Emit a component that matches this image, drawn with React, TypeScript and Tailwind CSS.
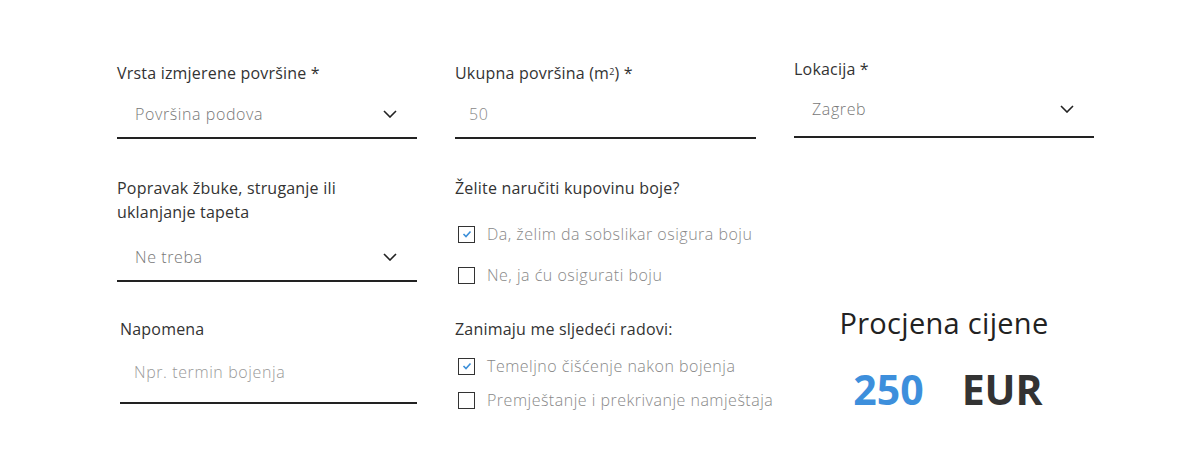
import React from "react";

const font = { fontFamily: '"Open Sans", "Noto Sans", sans-serif' };

function Chevron() {
  return (
    <svg width="14" height="8" viewBox="0 0 14 8" fill="none" className="shrink-0">
      <path d="M1 1l6 6 6-6" stroke="#222" strokeWidth="1.6" />
    </svg>
  );
}

function SelectField({ label, value, extra = "", box = "mt-[6px] h-[48px]" }: { label: React.ReactNode; value: string; extra?: string; box?: string }) {
  return (
    <div className={extra}>
      <div className="text-[16px] tracking-[0.2px] leading-6 text-[#333]">{label}</div>
      <div className={`${box} flex items-center justify-between pl-[18px] pr-[20px] border-b-2 border-[#222]`}>
        <span className="text-[16px] tracking-[0.6px] font-light text-[#777]">{value}</span>
        <Chevron />
      </div>
    </div>
  );
}

function Check({ checked, label }: { checked?: boolean; label: string }) {
  return (
    <label className="flex items-center gap-[12px] pl-[3px] whitespace-nowrap">
      <span className="shrink-0 w-[17px] h-[17px] border border-[#333] flex items-center justify-center bg-white">
        {checked && (
          <svg width="10" height="8" viewBox="0 0 10 8" fill="none">
            <path d="M1.5 4l2.5 2.5L8.5 1.5" stroke="#3b8fd9" strokeWidth="1.6" />
          </svg>
        )}
      </span>
      <span className="text-[16px] leading-6 tracking-[0.5px] font-light text-[#888]">{label}</span>
    </label>
  );
}

export default function App() {
  return (
    <div className="w-[1204px] h-[473px] bg-white" style={font}>
      <div className="grid grid-cols-[300px_301px_300px] gap-x-[38px] pl-[117px] pt-[61px]">
        {/* row 1 */}
        <SelectField label="Vrsta izmjerene površine *" value="Površina podova" />
        <div>
          <div className="text-[16px] tracking-[0.2px] leading-6 text-[#333]">
            Ukupna površina (m<sup className="text-[9px]">2</sup>) *
          </div>
          <div className="mt-[6px] h-[48px] flex items-center pl-[14px] border-b-2 border-[#222]">
            <span className="text-[16px] tracking-[0.6px] font-light text-[#888]">50</span>
          </div>
        </div>
        <SelectField label="Lokacija *" value="Zagreb" extra="-mt-[4px]" box="mt-[1px] h-[56px]" />

        {/* row 2 */}
        <div className="mt-[37px]">
          <div className="text-[16px] tracking-[0.2px] leading-6 text-[#333]">
            Popravak žbuke, struganje ili
            <br />
            uklanjanje tapeta
          </div>
          <div className="mt-[10px] h-[48px] flex items-center justify-between pl-[18px] pr-[20px] border-b-2 border-[#222]">
            <span className="text-[16px] tracking-[0.6px] font-light text-[#777]">Ne treba</span>
            <Chevron />
          </div>
        </div>
        <div className="mt-[37px]">
          <div className="text-[16px] tracking-[0.2px] leading-6 text-[#333]">Želite naručiti kupovinu boje?</div>
          <div className="mt-[22px] flex flex-col gap-[17px]">
            <Check checked label="Da, želim da sobslikar osigura boju" />
            <Check label="Ne, ja ću osigurati boju" />
          </div>
        </div>
        <div />

        {/* row 3 */}
        <div className="mt-[30px] pl-[3px]">
          <div className="text-[16px] tracking-[0.2px] leading-6 text-[#333]">Napomena</div>
          <div className="mt-[8px] h-[55px] flex items-start pt-[11px] pl-[14px] border-b-2 border-[#222]">
            <span className="text-[16px] tracking-[0.6px] font-light text-[#999]">Npr. termin bojenja</span>
          </div>
        </div>
        <div className="mt-[30px]">
          <div className="text-[16px] tracking-[0.2px] leading-6 text-[#333]">Zanimaju me sljedeći radovi:</div>
          <div className="mt-[13px] flex flex-col gap-[10px]">
            <Check checked label="Temeljno čišćenje nakon bojenja" />
            <Check label="Premještanje i prekrivanje namještaja" />
          </div>
        </div>
        <div className="mt-[20px] flex flex-col items-center">
          <div className="text-[29px] tracking-[0.3px] leading-8 text-[#222]">Procjena cijene</div>
          <div className="mt-[30px] flex items-baseline gap-[38px] pl-[8px] text-[41px] leading-10 font-bold">
            <span className="text-[#3d8fdc]">250</span>
            <span className="text-[#333]">EUR</span>
          </div>
        </div>
      </div>
    </div>
  );
}
